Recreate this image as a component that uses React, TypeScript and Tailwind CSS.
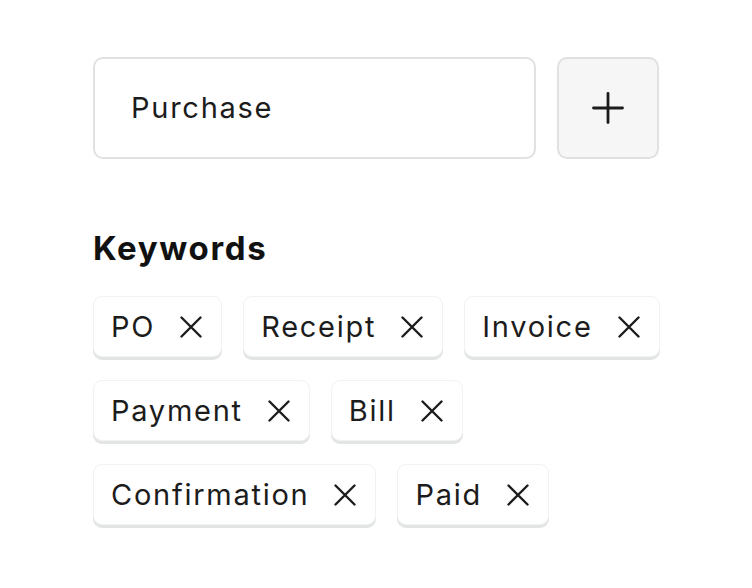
const rows = [
  ["PO", "Receipt", "Invoice"],
  ["Payment", "Bill"],
  ["Confirmation", "Paid"],
];

function CloseIcon() {
  return (
    <svg className="h-[22px] w-[22px] text-[#1c1c1c]" viewBox="0 0 22 22" fill="none" stroke="currentColor" strokeWidth={2.4} strokeLinecap="round">
      <path d="M1.5 1.5l19 19M20.5 1.5l-19 19" />
    </svg>
  );
}

function Chip({ label }: { label: string }) {
  return (
    <div className="flex h-[61px] shrink-0 items-center gap-[25px] rounded-[9px] border border-[#f1f2f2] bg-white pl-[17px] pr-[19px] shadow-[0_3px_0_#e2e5e4]">
      <span className="whitespace-nowrap text-[29px] leading-none tracking-[0.06em] text-[#1c1c1c]">{label}</span>
      <CloseIcon />
    </div>
  );
}

export default function App() {
  return (
    <div
      className="min-h-screen bg-white pl-[93px] pt-[57px]"
      style={{ fontFamily: "Inter, 'Noto Sans', sans-serif" }}
    >
      <div className="w-[566px]">
        <div className="flex gap-[21px]">
          <div className="flex h-[102px] flex-1 items-center rounded-[10px] border-2 border-[#dfe2e1] bg-white pl-[36px]">
            <span className="text-[29px] tracking-[0.06em] text-[#1c1c1c]">Purchase</span>
          </div>
          <button className="flex h-[102px] w-[102px] items-center justify-center rounded-[10px] border-2 border-[#dfe2e1] bg-[#f5f6f5]">
            <svg className="h-[32px] w-[32px] text-[#1c1c1c]" viewBox="0 0 32 32" fill="none" stroke="currentColor" strokeWidth={2.8} strokeLinecap="round">
              <path d="M16 1.5v29M1.5 16h29" />
            </svg>
          </button>
        </div>

        <h2 className="mt-[73px] text-[33px] font-bold leading-none tracking-[0.05em] text-[#111]">Keywords</h2>

        <div className="mt-[31px] flex flex-col gap-y-[23px]">
          {rows.map((row, i) => (
            <div key={i} className="flex gap-x-[21px]">
              {row.map((k) => (
                <Chip key={k} label={k} />
              ))}
            </div>
          ))}
        </div>
      </div>
    </div>
  );
}
